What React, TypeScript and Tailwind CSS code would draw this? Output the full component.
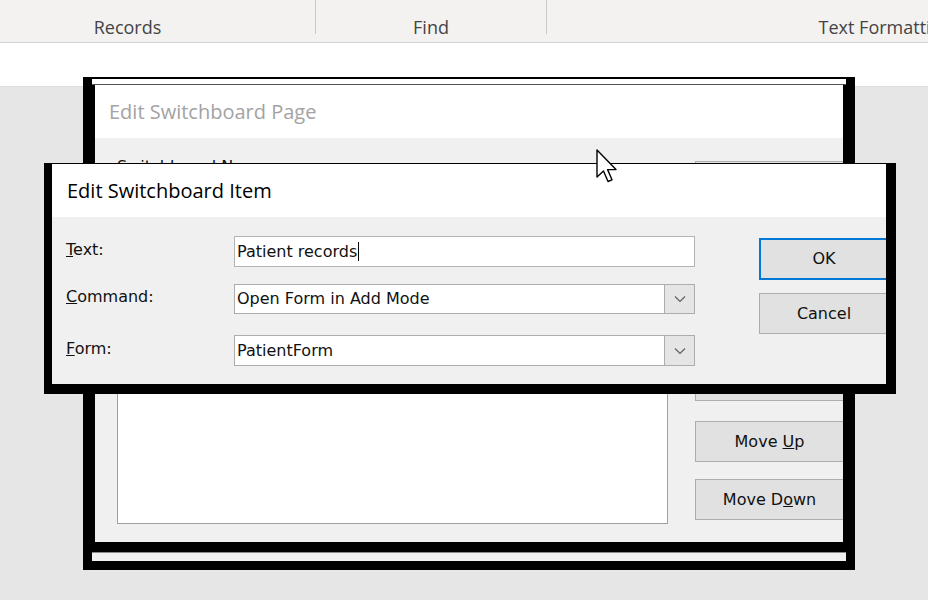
import type { ReactNode } from 'react'

const ui = "font-['DejaVu_Sans',sans-serif] text-[16px] text-[#111]"
const title = "font-['Open_Sans',sans-serif] text-[20px]"

function RibbonGroup({ label, width, last }: { label: string; width: string; last?: boolean }) {
  return (
    <div className={`flex h-[42px] shrink-0 ${width}`}>
      <div className="flex flex-1 justify-center pt-[15px] text-[18px] leading-6 text-[#444]">{label}</div>
      {!last && <div className="h-[34px] w-px bg-[#c9c9c9]" />}
    </div>
  )
}

function WinButton({ children, className }: { children: ReactNode; className?: string }) {
  return (
    <div
      className={`flex shrink-0 items-center justify-center border border-[#adadad] bg-[#e1e1e1] ${className ?? ''}`}
    >
      {children}
    </div>
  )
}

function Chevron() {
  return (
    <svg width="12" height="8" viewBox="0 0 12 8" fill="none">
      <polyline points="1,1.5 6,6.5 11,1.5" stroke="#606060" strokeWidth="1.2" />
    </svg>
  )
}

function Select({ value, className }: { value: string; className?: string }) {
  return (
    <div className={`flex w-[461px] border border-[#adadad] bg-white ${className ?? ''}`}>
      <div className="flex flex-1 items-center pl-[2px]">{value}</div>
      <div className="flex w-[30px] items-center justify-center border-l border-[#adadad] bg-[#e5e5e5]">
        <Chevron />
      </div>
    </div>
  )
}

function FieldRow({ label, hot, children, className }: { label: string; hot: string; children: ReactNode; className?: string }) {
  return (
    <div className={`flex items-center ${className ?? ''}`}>
      <div className="w-[168px] pb-[4px]">
        <u>{hot}</u>
        {label}
      </div>
      {children}
    </div>
  )
}

function BackDialog() {
  return (
    <div className="absolute left-[83px] top-[77px] flex h-[493px] w-[772px] flex-col bg-black px-[9px] pb-[9px] pt-[2px]">
      <div className="h-[6px] border-b border-[#555] bg-white" />
      <div className="flex flex-1 flex-col overflow-hidden border-x-[3px] border-black">
        <div className={`flex h-[53px] items-center bg-white pl-[14px] text-[#a3a3a3] ${title}`}>
          Edit Switchboard Page
        </div>
        <div className={`flex flex-1 bg-[#f0f0f0] pb-[18px] pl-[22px] pt-[19px] ${ui}`}>
          <div className="flex w-[551px] shrink-0 flex-col">
            <div className="leading-5">Switchboard Name:</div>
            <div className="mt-[6px] h-[30px] border border-[#adadad] bg-white" />
            <div className="mt-[14px] leading-5">Items on this Switchboard:</div>
            <div className="mt-[6px] flex-1 border border-[#a0a0a0] bg-white" />
          </div>
          <div className="ml-[27px] flex flex-col pt-[4px]">
            <WinButton className="h-[41px] w-[149px]">Close</WinButton>
            <WinButton className="mt-[17px] h-[41px] w-[149px]">New...</WinButton>
            <WinButton className="mt-[17px] h-[41px] w-[149px]">Edit...</WinButton>
            <WinButton className="mt-[42px] h-[41px] w-[149px]">Delete</WinButton>
            <WinButton className="mt-[20px] h-[41px] w-[149px]">
              Move&nbsp;<u>U</u>p
            </WinButton>
            <WinButton className="mt-[17px] h-[41px] w-[149px]">
              Move D<u>o</u>wn
            </WinButton>
          </div>
        </div>
      </div>
      <div className="mt-[10px] h-[9px] border-t border-[#8a8a8a] bg-[#f0f0f0]" />
    </div>
  )
}

function FrontDialog() {
  return (
    <div className="absolute left-[44px] top-[163px] flex h-[231px] w-[852px] flex-col bg-black pb-[10px] pl-[8px] pr-[10px] pt-px">
      <div className="flex flex-1 flex-col overflow-hidden">
        <div className={`flex h-[53px] items-center bg-white pl-[15px] text-black ${title}`}>
          Edit Switchboard Item
        </div>
        <div className={`flex flex-1 bg-[#f0f0f0] pl-[14px] pt-[19px] ${ui}`}>
          <div className="flex flex-col">
            <FieldRow hot="T" label="ext:">
              <div className="flex h-[31px] w-[461px] items-center border border-[#b4b4b4] bg-white pl-[2px]">
                Patient records
                <span className="ml-px h-[19px] w-px bg-black" />
              </div>
            </FieldRow>
            <FieldRow hot="C" label="ommand:" className="mt-[17px]">
              <Select value="Open Form in Add Mode" className="h-[30px]" />
            </FieldRow>
            <FieldRow hot="F" label="orm:" className="mt-[21px]">
              <Select value="PatientForm" className="h-[31px]" />
            </FieldRow>
          </div>
          <div className="ml-[64px] flex flex-col pt-[2px]">
            <div className="flex h-[42px] w-[130px] shrink-0 items-center justify-center border-2 border-[#0078d7] bg-[#e1e1e1]">
              OK
            </div>
            <WinButton className="mt-[13px] h-[41px] w-[130px]">Cancel</WinButton>
          </div>
        </div>
      </div>
    </div>
  )
}

function Pointer() {
  return (
    <svg className="absolute left-[596px] top-[149px]" width="22" height="35" viewBox="0 0 22 35">
      <path
        d="M1 1 L1 28 L7.5 22 L12 32.5 L16 30.8 L11.6 20.6 L20 20.6 Z"
        fill="white"
        stroke="black"
        strokeWidth="1.4"
        strokeLinejoin="round"
      />
    </svg>
  )
}

export default function App() {
  return (
    <div className="relative flex h-[600px] w-[928px] flex-col overflow-hidden bg-[#e6e6e6] font-['Open_Sans',sans-serif]">
      <div className="flex h-[43px] border-b border-[#d4d4d4] bg-[#f3f2f1]">
        <div className="-ml-[60px] flex">
          <RibbonGroup label="Records" width="w-[376px]" />
          <RibbonGroup label="Find" width="w-[231px]" />
          <RibbonGroup label="Text Formatting" width="w-[676px]" last />
        </div>
      </div>
      <div className="h-[43px] bg-white" />
      <div className="flex-1 border-t border-[#dcdcdc]" />
      <BackDialog />
      <FrontDialog />
      <Pointer />
    </div>
  )
}
